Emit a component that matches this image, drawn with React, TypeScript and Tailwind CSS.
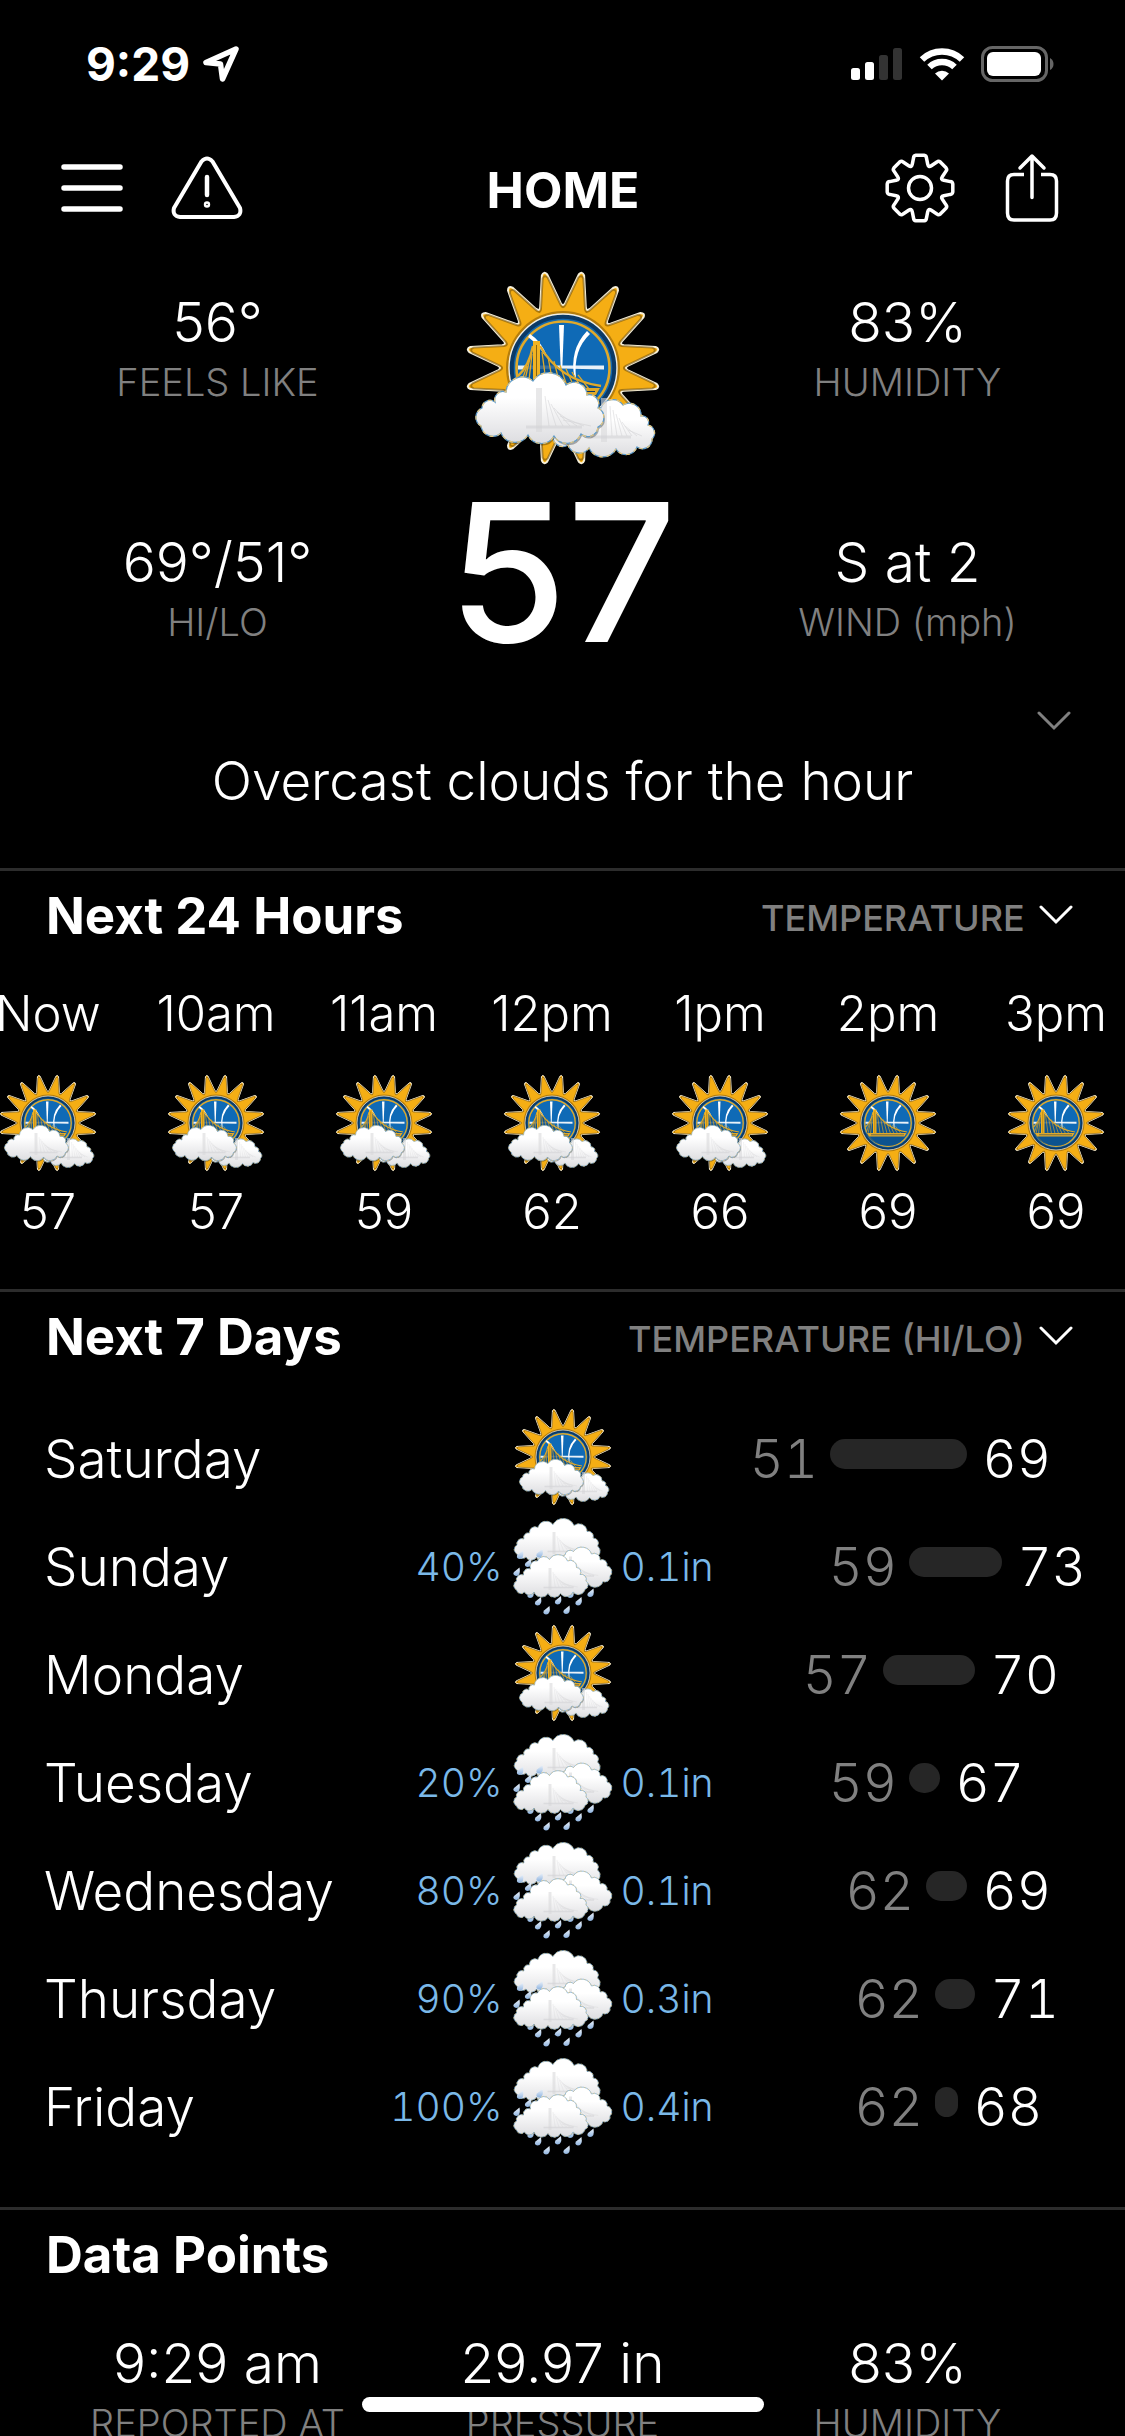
import type { ReactNode } from 'react';

type Point = [number, number];
type Condition = 'sunny' | 'partly' | 'rain';

interface Hour {
  label: string;
  condition: Condition;
  temp: number;
}

interface Day {
  name: string;
  condition: Condition;
  chance?: string;
  amount?: string;
  lo: number;
  hi: number;
  // offset and length of the range bar
  start: number;
  span: number;
}

const hours: Hour[] = [
  { label: 'Now', condition: 'partly', temp: 57 },
  { label: '10am', condition: 'partly', temp: 57 },
  { label: '11am', condition: 'partly', temp: 59 },
  { label: '12pm', condition: 'partly', temp: 62 },
  { label: '1pm', condition: 'partly', temp: 66 },
  { label: '2pm', condition: 'sunny', temp: 69 },
  { label: '3pm', condition: 'sunny', temp: 69 },
];

const days: Day[] = [
  { name: 'Saturday', condition: 'partly', lo: 51, hi: 69, start: 0, span: 137 },
  { name: 'Sunday', condition: 'rain', chance: '40%', amount: '0.1in', lo: 59, hi: 73, start: 79, span: 93 },
  { name: 'Monday', condition: 'partly', lo: 57, hi: 70, start: 53, span: 92 },
  { name: 'Tuesday', condition: 'rain', chance: '20%', amount: '0.1in', lo: 59, hi: 67, start: 79, span: 31 },
  { name: 'Wednesday', condition: 'rain', chance: '80%', amount: '0.1in', lo: 62, hi: 69, start: 96, span: 41 },
  { name: 'Thursday', condition: 'rain', chance: '90%', amount: '0.3in', lo: 62, hi: 71, start: 105, span: 40 },
  { name: 'Friday', condition: 'rain', chance: '100%', amount: '0.4in', lo: 62, hi: 68, start: 105, span: 23 },
];

const polar = (r: number, deg: number): Point => {
  const a = (deg * Math.PI) / 180;
  return [r * Math.sin(a), -r * Math.cos(a)];
};

const fmt = ([x, y]: Point) => `${x.toFixed(1)} ${y.toFixed(1)}`;

// 16 rounded rays around the disc
const sunPath = (() => {
  let d = '';
  for (let i = 0; i < 16; i++) {
    const a = i * 22.5;
    const tip = a + 11.25;
    d += `${i === 0 ? 'M' : 'L'}${fmt(polar(65, a - 2))} Q${fmt(polar(61, a))} ${fmt(polar(65, a + 2))} `;
    d += `L${fmt(polar(95, tip - 1.6))} Q${fmt(polar(99, tip))} ${fmt(polar(95, tip + 1.6))} `;
  }
  return `${d}Z`;
})();

const gearPath = (() => {
  let d = '';
  for (let i = 0; i < 8; i++) {
    const a = i * 45;
    d += `${i === 0 ? 'M' : 'L'}${fmt(polar(25, a - 18))} L${fmt(polar(31, a - 12))} Q${fmt(polar(33, a - 11))} ${fmt(polar(33, a - 7))} `;
    d += `L${fmt(polar(33, a + 7))} Q${fmt(polar(33, a + 11))} ${fmt(polar(31, a + 12))} L${fmt(polar(25, a + 18))} `;
    d += `Q${fmt(polar(22, a + 22.5))} ${fmt(polar(25, a + 27))} `;
  }
  return `${d}Z`;
})();

// joins the points with outward arcs
function puffy(points: Point[]) {
  return (
    points.reduce((d, p, i) => {
      if (i === 0) return `M${fmt(p)}`;
      const prev = points[i - 1];
      const r = Math.hypot(p[0] - prev[0], p[1] - prev[1]) * 0.56;
      return `${d} A${r.toFixed(1)} ${r.toFixed(1)} 0 0 1 ${fmt(p)}`;
    }, '') + ' Z'
  );
}

const frontCloud = puffy([[18, 158], [19, 140], [32, 134], [43, 124], [70, 113], [103, 117], [124, 127], [135, 140], [135, 159], [118, 166], [91, 168], [65, 167], [38, 165], [18, 158]]);
const sideCloud = puffy([[90, 168], [112, 160], [138, 140], [160, 137], [178, 148], [185, 157], [189, 171], [174, 179], [153, 181], [126, 180], [105, 177], [90, 168]]);
const rainBack = puffy([[8, 78], [8, 60], [22, 48], [33, 36], [50, 25], [80, 19], [122, 21], [148, 33], [160, 46], [169, 62], [165, 85], [120, 90], [84, 88], [47, 84], [26, 84], [8, 78]]);
const rainSide = puffy([[100, 95], [104, 80], [121, 73], [157, 78], [174, 90], [188, 102], [194, 122], [180, 133], [150, 137], [120, 135], [100, 95]]);
const rainFront = puffy([[7, 150], [7, 132], [21, 120], [35, 108], [49, 92], [73, 89], [109, 92], [127, 105], [134, 119], [146, 132], [144, 149], [120, 154], [95, 157], [70, 157], [42, 154], [23, 154], [7, 150]]);

const drops: Point[] = [[7, 114], [30, 96], [14, 80], [53, 77], [35, 158], [115, 158], [50, 173], [90, 171], [131, 173], [155, 156], [67, 191], [107, 190]];

function Cloud({ d, tower, base, width }: { d: string; tower: number; base: number; width: number }) {
  return (
    <g>
      <path d={d} fill="url(#cloud)" stroke="#5f9bc8" strokeWidth="1.2" />
      <path d={d} fill="none" stroke="#e3c680" strokeWidth="1.2" strokeDasharray="4 4" />
      <path d={`M${tower} ${base - 42} h6 v44 h-6 Z`} fill="#d8d8da" opacity="0.6" />
      <g stroke="#c9c9cc" strokeWidth="0.7" opacity="0.6">
        {[1, 2, 3, 4, 5, 6, 7].map((n) => (
          <path key={n} d={`M${tower + 6 + n * 3} ${base - 38 + n * 4} L${tower + 6 + (n * width) / 8} ${base - 4}`} />
        ))}
      </g>
      <path d={`M${tower - 10} ${base - 3} h${width}`} stroke="#d3d3d6" strokeWidth="3" opacity="0.6" />
    </g>
  );
}

function Sun() {
  return (
    <g>
      <g transform="translate(100 100)">
        <path d={sunPath} fill="#f5ae14" stroke="#f6efd8" strokeWidth="2" strokeLinejoin="round" />
        <path d={sunPath} fill="none" stroke="#6b4a06" strokeWidth="2" strokeLinejoin="round" opacity="0.55" transform="scale(0.965)" />
        <circle r="57" fill="#8a5c05" opacity="0.6" />
        <circle r="54" fill="#0c3a66" stroke="#f2efe4" strokeWidth="1.4" />
        <circle r="50" fill="#1269b0" stroke="#0a3a68" strokeWidth="1.5" />
        <circle r="46.5" fill="#0f6ab6" stroke="#e0a92a" strokeWidth="2.6" />
      </g>
      <path d="M96 57 h5 l-1.6 41 h-1.8 Z" fill="#fff" />
      <path d="M55 97.500 l86 0 v4 l-43 -1 l-43 1 Z" fill="#e9f1f8" />
      <path d="M67 66 Q78 73 84 88 L82 88 Q76 77 65 69 Z" fill="#fff" />
      <path d="M127 66 Q110 82 113 110 L111.500 110 Q106 82 124 63 Z" fill="#fff" />
      <path d="M56 126 Q62 92 72 76 Q100 112 138 118 L133 130 Q118 148 98 146 Q72 144 60 127 Z" fill="#0d4d86" opacity="0.8" />
      <g fill="none" stroke="#e0a92a" strokeWidth="1.3">
        <path d="M77 78 Q96 112 138 118" strokeWidth="2.4" />
        <path d="M70 78 Q66 98 55 108" strokeWidth="2.4" />
        {[0, 1, 2, 3, 4, 5, 6].map((n) => (
          <path key={n} d={`M${79 + n * 6} ${84 + n * 5 - n * n * 0.2} L${84 + n * 7} 121`} />
        ))}
        <path d="M67 90 L60 121 M69 86 L65 121 M64 98 L57 118" />
      </g>
      <path d="M70 73 h7 v52 h-7 Z" fill="#f0b323" />
      <path d="M73.500 77 v46" stroke="#8a6410" strokeWidth="1" />
      <path d="M58 120 L137 120 L133 127 L62 127 Z" fill="#e0a92a" />
      <path d="M66 123.500 h66" stroke="#0c3a66" strokeWidth="1" />
    </g>
  );
}

function WeatherIcon({ condition, className }: { condition: Condition; className: string }) {
  return (
    <svg viewBox="0 0 200 200" className={className} role="img" aria-label={condition}>
      {condition !== 'rain' && <Sun />}
      {condition === 'partly' && (
        <>
          <Cloud d={sideCloud} tower={138} base={172} width={40} />
          <path d={frontCloud} fill="#000" opacity="0.3" transform="translate(1 2)" />
          <Cloud d={frontCloud} tower={73} base={162} width={56} />
        </>
      )}
      {condition === 'rain' && (
        <>
          <Cloud d={rainBack} tower={79} base={76} width={66} />
          {drops.map(([x, y]) => (
            <path key={`${x}-${y}`} d={`M${x + 6} ${y - 9} Q${x + 9} ${y + 8} ${x - 1} ${y + 8} Q${x - 9} ${y + 6} ${x - 5} ${y} Z`} fill="url(#drop)" />
          ))}
          <Cloud d={rainSide} tower={112} base={125} width={60} />
          <Cloud d={rainFront} tower={71} base={148} width={60} />
        </>
      )}
    </svg>
  );
}

// gradients shared by every weather icon
function IconDefs() {
  return (
    <svg className="absolute h-0 w-0" aria-hidden="true">
      <defs>
        <linearGradient id="cloud" x1="0" y1="0" x2="0" y2="1">
          <stop offset="0.35" stopColor="#ffffff" />
          <stop offset="1" stopColor="#dddde0" />
        </linearGradient>
        <linearGradient id="drop" x1="0" y1="0" x2="0" y2="1">
          <stop offset="0" stopColor="#eef4fb" />
          <stop offset="1" stopColor="#8fb4e0" />
        </linearGradient>
      </defs>
    </svg>
  );
}

function Chevron({ className }: { className: string }) {
  return (
    <svg viewBox="0 0 34 20" className={`h-5 w-[34px] ${className}`} fill="none" stroke="currentColor" strokeWidth="3" strokeLinecap="round" aria-hidden="true">
      <path d="M2 2 L17 17 L32 2" />
    </svg>
  );
}

function StatusBar() {
  return (
    <div className="flex h-32 items-center justify-between pr-[71px] pl-[86px]">
      <div className="flex items-center gap-3">
        <span className="text-[46px] leading-none font-bold">9:29</span>
        <svg viewBox="0 0 38 38" className="size-[38px]" fill="none" stroke="#fff" strokeWidth="5.500" strokeLinejoin="round" aria-hidden="true">
          <path d="M34 4 L4 17.500 L18.500 19 L20.500 34 Z" />
        </svg>
      </div>
      <div className="flex items-center gap-4">
        <svg viewBox="0 0 52 34" className="h-[34px] w-[52px]" aria-hidden="true">
          <rect x="0" y="21" width="9" height="12" rx="2.500" fill="#fff" />
          <rect x="14" y="15" width="9" height="18" rx="2.500" fill="#fff" />
          <rect x="28" y="8" width="9" height="25" rx="2.500" fill="#333" />
          <rect x="42" y="1" width="9" height="32" rx="2.500" fill="#333" />
        </svg>
        <svg viewBox="0 0 46 34" className="h-[34px] w-[46px]" aria-hidden="true">
          <g fill="none" stroke="#fff" strokeWidth="6.500">
            <path d="M3 12.500 A29 29 0 0 1 43 12.500" />
            <path d="M10.500 20 A18 18 0 0 1 35.500 20" />
          </g>
          <path d="M16 26.500 A10.500 10.500 0 0 1 30 26.500 L23 33.500 Z" fill="#fff" />
        </svg>
        <svg viewBox="0 0 73 36" className="h-9 w-[73px]" aria-hidden="true">
          <rect x="1.500" y="1.500" width="64" height="33" rx="10" fill="none" stroke="#666" strokeWidth="3" />
          <rect x="6" y="6" width="54" height="24" rx="6" fill="#fff" />
          <path d="M69 12 Q72.500 14 72.500 18 Q72.500 22 69 24 Z" fill="#666" />
        </svg>
      </div>
    </div>
  );
}

function NavBar() {
  return (
    <nav className="grid h-[119px] grid-cols-[1fr_auto_1fr] items-center pr-[66px] pl-[61px]">
      <div className="flex items-center gap-12">
        <button type="button" aria-label="Menu">
          <svg viewBox="0 0 62 50" className="h-[50px] w-[62px]" stroke="#fff" strokeWidth="5.500" strokeLinecap="round">
            <path d="M3 4 H59 M3 25 H59 M3 46 H59" />
          </svg>
        </button>
        <button type="button" aria-label="Alerts">
          <svg viewBox="0 0 72 64" className="h-16 w-[72px]" fill="none" stroke="#fff" strokeWidth="4" strokeLinecap="round">
            <path d="M30.500 5.500 Q36 -0.500 41.500 5.500 L69 52 Q71 60 63 61 H9 Q1 60 3 52 Z" />
            <path d="M36 21 V39" strokeWidth="4.500" />
            <circle cx="36" cy="48.500" r="1.200" />
          </svg>
        </button>
      </div>
      <h1 className="pt-1 pl-1.5 text-[50px] leading-none font-bold">HOME</h1>
      <div className="flex items-center justify-end gap-[50px]">
        <button type="button" aria-label="Settings">
          <svg viewBox="-35 -35 70 70" className="size-[70px]" fill="none" stroke="#fff" strokeWidth="3.500" strokeLinejoin="round">
            <path d={gearPath} />
            <circle r="11.500" />
          </svg>
        </button>
        <button type="button" aria-label="Share">
          <svg viewBox="0 0 54 70" className="h-[70px] w-[54px]" fill="none" stroke="#fff" strokeWidth="3.500" strokeLinejoin="round">
            <path d="M19 21.500 H9 Q2.500 21.500 2.500 28 V60 Q2.500 67 9 67 H45 Q51.500 67 51.500 60 V28 Q51.500 21.500 45 21.500 H36" />
            <path d="M27 3 V44.500 M15 15 L27 3 L39 15" strokeLinecap="round" />
          </svg>
        </button>
      </div>
    </nav>
  );
}

function Stat({ value, label }: { value: string; label: string }) {
  return (
    <div className="flex flex-col items-center gap-1 whitespace-nowrap">
      <dd className="text-[55px] leading-[64px]">{value}</dd>
      <dt className="order-last text-[38px] leading-[48px] text-[#808080]">{label}</dt>
    </div>
  );
}

function Section({ title, menu, children }: { title: string; menu?: string; children: ReactNode }) {
  return (
    <section className="border-t-[3px] border-[#2c2c2c]">
      <header className="flex h-[88px] items-center justify-between pr-[52px] pl-[46px]">
        <h2 className="text-[51px] leading-none font-bold">{title}</h2>
        {menu && (
          <label className="flex items-center gap-3.5">
            <select aria-label={title} className="appearance-none bg-transparent pt-1.5 text-[36px] leading-10 font-medium text-[#808080]">
              <option>{menu}</option>
            </select>
            <Chevron className="text-white" />
          </label>
        )}
      </header>
      {children}
    </section>
  );
}

function DayRow({ day }: { day: Day }) {
  return (
    <li className="grid h-[108px] grid-cols-[1fr_100px_1fr] items-center">
      <div className="flex items-center justify-between pt-1 pr-2.5 pl-11">
        <span className="text-[53px] leading-[64px]">{day.name}</span>
        <span className="text-[39px] leading-[64px] text-[#7ab8e8]">{day.chance}</span>
      </div>
      <WeatherIcon condition={day.condition} className="size-[100px]" />
      <div className="flex items-center pt-1">
        <span className="w-[137px] shrink-0 pl-2 text-[39px] leading-[64px] text-[#7ab8e8]">{day.amount}</span>
        <div className="flex items-center gap-4 text-[53px] leading-[64px]" style={{ marginLeft: day.start }}>
          <span className="w-16 text-right text-[#808080]">{day.lo}</span>
          <span className="mb-2.5 h-[30px] shrink-0 rounded-full bg-[#262626]" style={{ width: day.span }} />
          <span>{day.hi}</span>
        </div>
      </div>
    </li>
  );
}

export default function App() {
  return (
    <div className="h-screen overflow-hidden bg-black font-['Inter','Liberation_Sans',sans-serif] font-light text-white">
      <IconDefs />
      <StatusBar />
      <NavBar />

      <main>
        <div className="grid grid-cols-3 px-[45px]">
          <dl className="flex flex-col gap-[124px] pt-[43px]">
            <Stat value="56°" label="FEELS LIKE" />
            <Stat value="69°/51°" label="HI/LO" />
          </dl>
          <div className="flex flex-col items-center gap-6 pt-[21px]">
            <WeatherIcon condition="partly" className="size-[200px]" />
            <p className="text-[192px] leading-[160px] font-medium">57</p>
          </div>
          <dl className="flex flex-col gap-[124px] pt-[43px]">
            <Stat value="83%" label="HUMIDITY" />
            <Stat value="S at 2" label="WIND (mph)" />
          </dl>
        </div>

        <div className="flex justify-end pt-[59px] pr-[54px]">
          <button type="button" aria-label="Show details">
            <Chevron className="text-[#808080]" />
          </button>
        </div>
        <p className="pt-[18px] pb-[55px] text-center text-[53px] leading-[64px]">Overcast clouds for the hour</p>

        <Section title="Next 24 Hours" menu="TEMPERATURE">
          <ol className="-ml-9 flex pt-[23px] pb-[45px]">
            {hours.map((hour) => (
              <li key={hour.label} className="flex w-[168px] shrink-0 flex-col items-center text-[49px] leading-[64px]">
                <span>{hour.label}</span>
                <WeatherIcon condition={hour.condition} className="mt-[27px] mb-[7px] size-[100px]" />
                <span>{hour.temp}</span>
              </li>
            ))}
          </ol>
        </Section>

        <Section title="Next 7 Days" menu="TEMPERATURE (HI/LO)">
          <ol className="pt-[23px] pb-12 tabular-nums">
            {days.map((day) => (
              <DayRow key={day.name} day={day} />
            ))}
          </ol>
        </Section>

        <Section title="Data Points">
          <dl className="grid grid-cols-3 px-[45px] pt-[33px]">
            <Stat value="9:29 am" label="REPORTED AT" />
            <Stat value="29.97 in" label="PRESSURE" />
            <Stat value="83%" label="HUMIDITY" />
          </dl>
        </Section>
      </main>

      <div className="fixed bottom-6 left-1/2 h-[15px] w-[402px] -translate-x-1/2 rounded-full bg-white" />
    </div>
  );
}
